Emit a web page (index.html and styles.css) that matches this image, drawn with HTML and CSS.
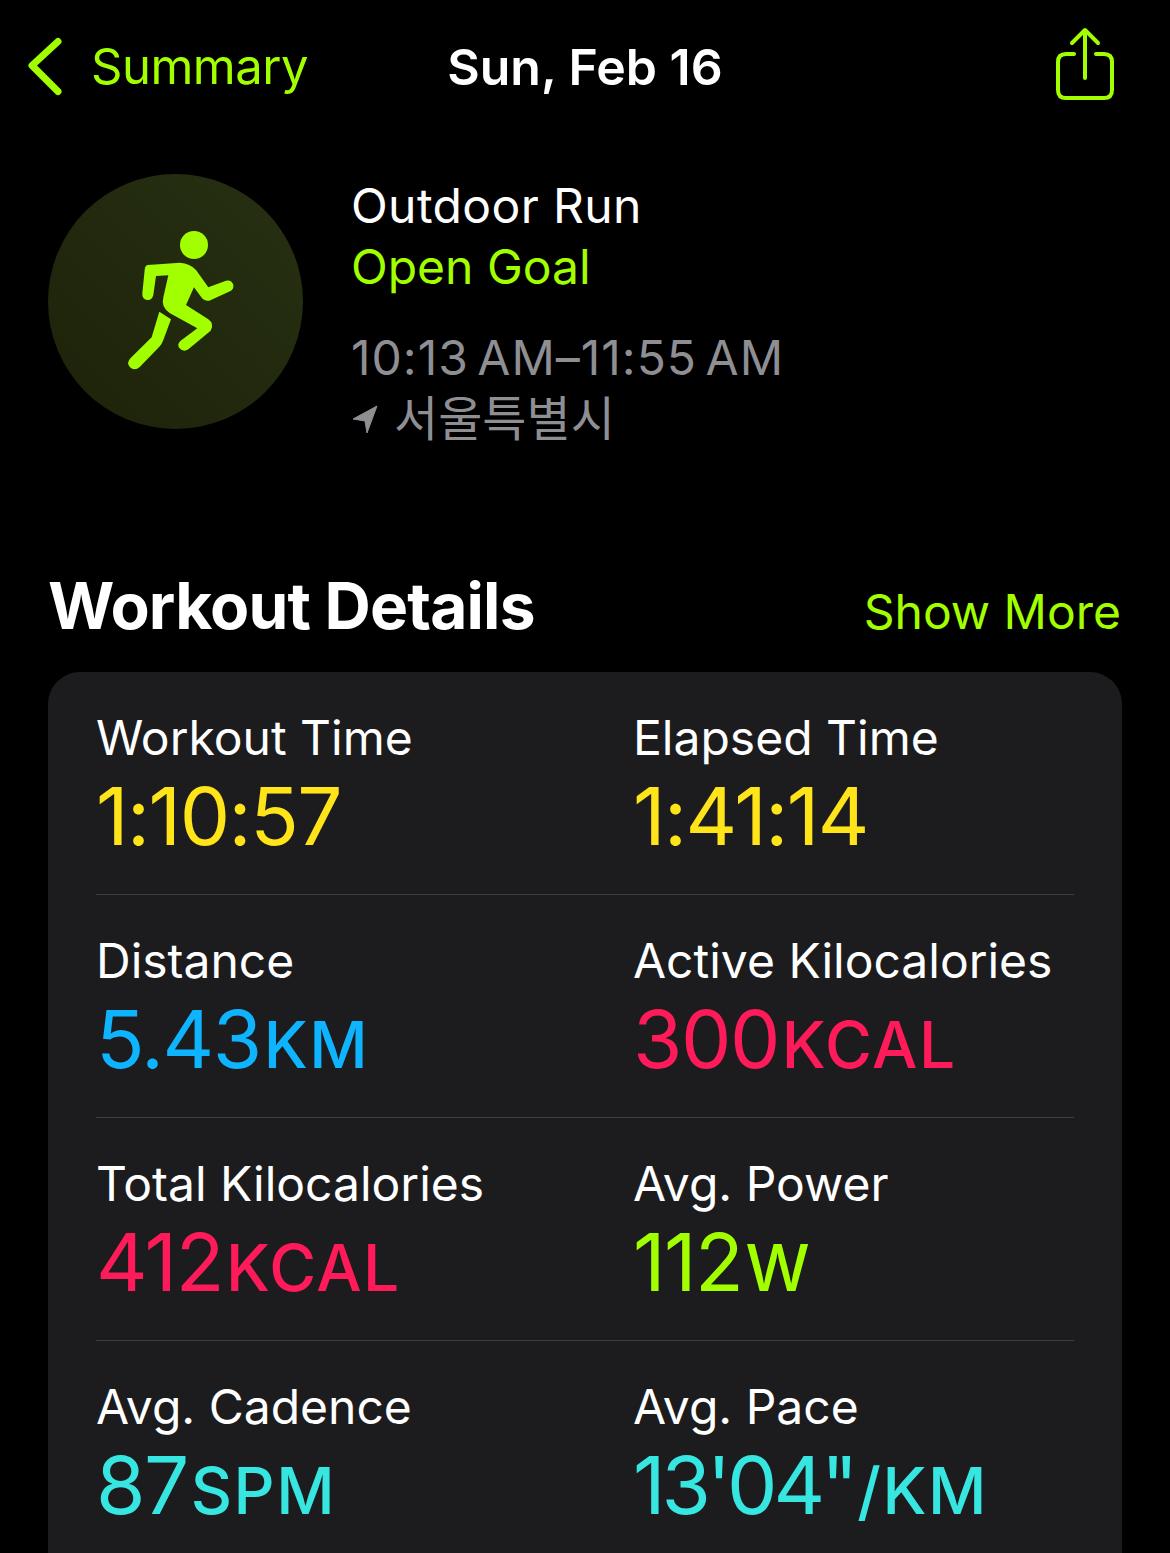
FILE: index.html
```html
<!DOCTYPE html>
<html lang="en">

<head>
    <meta charset="UTF-8">
    <title>Workout</title>
    <link rel="stylesheet" href="styles.css">
</head>

<body>
    <div class="nav">
        <div class="nav-back">
            <svg class="chevron" width="36" height="60" viewBox="0 0 36 60">
                <path d="M30 4.5 L4 28.5 L30 54.5" fill="none" stroke="#a2ff00" stroke-width="7" stroke-linecap="round" stroke-linejoin="round" />
            </svg>
            <span class="nav-label">Summary</span>
        </div>
        <div class="nav-title">Sun, Feb 16</div>
        <svg class="share" width="60" height="74" viewBox="0 0 60 74">
            <path d="M19 27 H11 Q3 27 3 35 V63 Q3 71 11 71 H49 Q57 71 57 63 V35 Q57 27 49 27 H41" fill="none" stroke="#a2ff00" stroke-width="4" stroke-linecap="round" />
            <path d="M30 51 V3 M17 16 L30 3 L43 16" fill="none" stroke="#a2ff00" stroke-width="4" stroke-linecap="round" stroke-linejoin="round" />
        </svg>
    </div>

    <div class="workout">
        <div class="workout-icon">
            <svg width="255" height="255" viewBox="144 522 765 765">
                <circle cx="582" cy="735" r="42" fill="#a2ff00" />
                <path d="M443 795 L540 788 Q570 790 588 810 L625 862 L678 842 Q694 838 700 854 Q702 868 690 874 L628 902 Q612 904 604 892 L582 862 L558 915 L625 958 Q644 972 632 992 L565 1048 Q550 1058 538 1044 Q530 1032 542 1022 L592 985 L510 940 Q482 922 490 892 L505 826 L468 828 L460 885 Q456 902 441 900 Q426 898 427 880 L434 810 Q435 797 443 795 Z" fill="#a2ff00" />
                <path d="M478 935 L513 958 L490 1020 Q486 1032 478 1040 L420 1100 Q404 1114 390 1102 Q378 1088 392 1074 L455 1012 Z" fill="#a2ff00" />
            </svg>
        </div>
        <div class="workout-info">
            <div class="workout-name">Outdoor Run</div>
            <div class="workout-goal">Open Goal</div>
            <div class="workout-time">10:13 AM–11:55 AM</div>
            <div class="workout-place">
                <svg width="26" height="28" viewBox="0 0 26 28">
                    <path d="M25 1 L1 14 L13 16 L15 28 Z" fill="#8e8e93" stroke="#8e8e93" stroke-width="1" stroke-linejoin="round" />
                </svg>
                <span>서울특별시</span>
            </div>
        </div>
    </div>

    <div class="section-head">
        <div class="section-title">Workout Details</div>
        <div class="section-more">Show More</div>
    </div>

    <div class="card">
        <div class="card-row">
            <div class="stat">
                <div class="stat-label">Workout Time</div>
                <div class="stat-value yellow">1:10:57</div>
            </div>
            <div class="stat">
                <div class="stat-label">Elapsed Time</div>
                <div class="stat-value yellow">1:41:14</div>
            </div>
        </div>
        <div class="card-row">
            <div class="stat">
                <div class="stat-label">Distance</div>
                <div class="stat-value blue">5.43<span class="unit">KM</span></div>
            </div>
            <div class="stat">
                <div class="stat-label">Active Kilocalories</div>
                <div class="stat-value pink">300<span class="unit">KCAL</span></div>
            </div>
        </div>
        <div class="card-row">
            <div class="stat">
                <div class="stat-label">Total Kilocalories</div>
                <div class="stat-value pink">412<span class="unit">KCAL</span></div>
            </div>
            <div class="stat">
                <div class="stat-label">Avg. Power</div>
                <div class="stat-value green">112<span class="unit">W</span></div>
            </div>
        </div>
        <div class="card-row">
            <div class="stat">
                <div class="stat-label">Avg. Cadence</div>
                <div class="stat-value teal">87<span class="unit">SPM</span></div>
            </div>
            <div class="stat">
                <div class="stat-label">Avg. Pace</div>
                <div class="stat-value teal pace">13'04"<span class="unit">/KM</span></div>
            </div>
        </div>
    </div>
</body>

</html>
```

FILE: styles.css
```css
html,
body {
    height: 100%;
}

body {
    margin: 0;
    background-color: #000;
    color: #fff;
    font-family: Inter, "Noto Sans CJK KR", sans-serif;
    overflow: hidden;
}

.nav {
    position: relative;
    display: flex;
    align-items: center;
    justify-content: space-between;
    height: 133px;
    padding: 0 55px 0 28px;
}

.nav-back {
    display: flex;
    align-items: center;
    gap: 27px;
}

.nav-label {
    color: #a2ff00;
    font-size: 49px;
    letter-spacing: -0.5px;
}

.nav-title {
    position: absolute;
    left: 0;
    right: 0;
    text-align: center;
    font-size: 50px;
    font-weight: 600;
}

.share {
    margin-top: -6px;
}

.workout {
    display: flex;
    gap: 48px;
    margin-top: 41px;
    padding-left: 48px;
}

.workout-icon {
    width: 255px;
    height: 255px;
    border-radius: 50%;
    background: linear-gradient(45deg, #1c2308, #283014);
}

.workout-icon svg {
    display: block;
}

.workout-info {
    font-size: 48px;
    line-height: 61px;
    margin-top: 1px;
}

.workout-name {
    letter-spacing: 0.4px;
}

.workout-goal {
    color: #a2ff00;
}

.workout-time {
    margin-top: 30px;
    color: #8e8e93;
    letter-spacing: 1px;
    word-spacing: -6px;
}

.workout-place {
    display: flex;
    align-items: center;
    gap: 16px;
    padding-left: 1px;
    color: #8e8e93;
}

.section-head {
    display: flex;
    justify-content: space-between;
    align-items: baseline;
    margin-top: 118px;
    padding: 0 49px 0 48px;
}

.section-title {
    font-size: 64px;
    font-weight: 700;
    letter-spacing: -0.8px;
}

.section-more {
    color: #a2ff00;
    font-size: 48px;
}

.card {
    margin: 28px 48px 0;
    padding: 0 48px;
    background-color: #1c1c1e;
    border-radius: 32px 32px 0 0;
}

.card-row {
    display: grid;
    grid-template-columns: 537px 1fr;
    height: 223px;
    box-sizing: border-box;
    border-bottom: 1px solid #3d3d40;
}

.stat {
    padding-top: 36px;
}

.stat-label {
    font-size: 48px;
    line-height: 60px;
}

.stat-value {
    margin-top: 6px;
    font-size: 80px;
    line-height: 84px;
    letter-spacing: -1.5px;
}

.unit {
    margin-left: 3px;
    font-size: 64px;
    font-weight: 500;
    letter-spacing: 1.5px;
}

.pace {
    letter-spacing: -4px;
}

.yellow {
    color: #ffe41a;
}

.blue {
    color: #0fb4ff;
}

.pink {
    color: #ff1a5a;
}

.green {
    color: #a2ff00;
}

.teal {
    color: #37e6e0;
}
```
